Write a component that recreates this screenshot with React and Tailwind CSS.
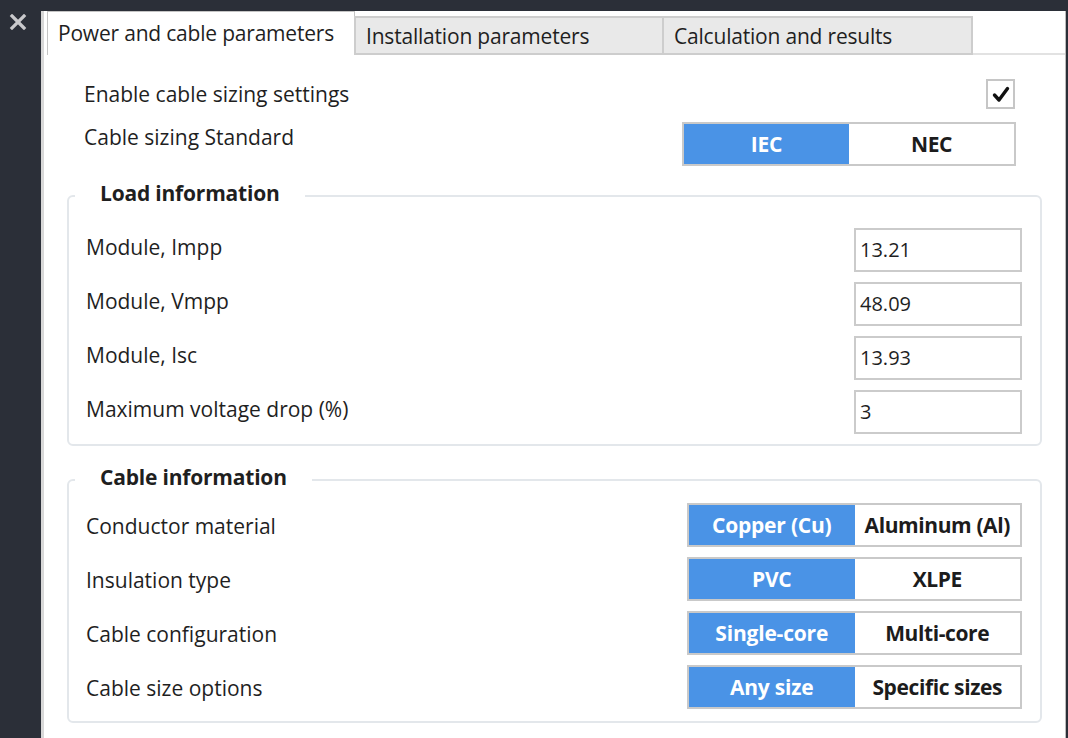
import React from "react";

const font = { fontFamily: '"Open Sans", "Liberation Sans", sans-serif' };

function Toggle({ left, right, className }) {
  return (
    <div className={"flex h-[44px] border-2 border-[#c9c9c9] " + className}>
      <div className="flex-1 flex items-center justify-center bg-[#4a93e6] text-white font-bold text-[21px] leading-[28px] tracking-[-0.2px]">
        {left}
      </div>
      <div className="flex-1 flex items-center justify-center bg-white text-[#1c1c1c] font-bold text-[21px] leading-[28px] tracking-[-0.4px]">
        {right}
      </div>
    </div>
  );
}

function InputRow({ label, value }) {
  return (
    <div className="flex items-center justify-between">
      <span className="pb-[6px]">{label}</span>
      <div className="w-[168px] h-[44px] border-2 border-[#cbcbcb] flex items-center pl-[4px] text-[20px]">
        {value}
      </div>
    </div>
  );
}

function ToggleRow({ label, left, right }) {
  return (
    <div className="flex items-center justify-between">
      <span className="pt-[2px]">{label}</span>
      <Toggle left={left} right={right} className="w-[335px]" />
    </div>
  );
}

export default function App() {
  return (
    <div
      className="w-[1068px] h-[738px] bg-[#2b2f38] flex pt-[11px] pr-[2px] text-[#1f1f1f] text-[21px] leading-[28px] overflow-hidden"
      style={font}
    >
      <div className="w-[41px] shrink-0 flex justify-center pt-[2px]">
        <svg width="18" height="16" viewBox="0 0 18 16" className="mt-[1px] -ml-[5px]">
          <path d="M3 2 L15 14 M15 2 L3 14" stroke="#c9c9cc" strokeWidth="3.2" strokeLinecap="square" />
        </svg>
      </div>
      <div className="flex-1 bg-white border-l-[3px] border-[#d8d8d8] border-r border-r-[#bcbcbc] flex flex-col">
        {/* Tabs */}
        <div className="flex items-end h-[44px] pl-[3px]">
          <div className="h-[44px] w-[308px] border border-b-0 border-[#c4c4c4] bg-white flex items-center pl-[10px] pb-[1px] tracking-[-0.2px]">
            Power and cable parameters
          </div>
          <div className="h-[39px] w-[310px] border-2 border-[#cdcdcd] bg-[#e9e9e9] flex items-center pl-[10px] -ml-[1px] tracking-[-0.2px]">
            Installation parameters
          </div>
          <div className="h-[39px] w-[309px] border-2 border-l-0 border-[#cdcdcd] bg-[#e9e9e9] flex items-center pl-[10px] tracking-[-0.2px]">
            Calculation and results
          </div>
          <div className="flex-1 h-[2px] bg-[#e2e2e2]"></div>
        </div>

        {/* Top settings */}
        <div className="pl-[40px] pr-[50px] pt-[24px]">
          <div className="flex items-center justify-between h-[30px]">
            <span>Enable cable sizing settings</span>
            <div className="w-[29px] h-[30px] border-2 border-[#c6c6c6] flex items-center justify-center">
              <svg width="18" height="17" viewBox="0 0 18 17">
                <path d="M2.5 9 L7 14 L15.5 2.5" fill="none" stroke="#111" strokeWidth="3.4" strokeLinecap="round" strokeLinejoin="round" />
              </svg>
            </div>
          </div>
          <div className="flex items-start justify-between mt-[13px]">
            <span className="pt-[1px]">Cable sizing Standard</span>
            <Toggle left="IEC" right="NEC" className="w-[334px] -mr-[1px]" />
          </div>
        </div>

        {/* Load information */}
        <fieldset className="mx-[23px] mt-[13px] border-2 border-[#e3e7eb] rounded-[6px] px-0 pt-[15px] pb-[10px]">
          <legend className="ml-[6px] px-[25px] pb-[6px] font-bold text-[21px] leading-[28px] tracking-[-0.2px]">Load information</legend>
          <div className="flex flex-col gap-[10px] pl-[17px] pr-[18px]">
            <InputRow label="Module, Impp" value="13.21" />
            <InputRow label="Module, Vmpp" value="48.09" />
            <InputRow label="Module, Isc" value="13.93" />
            <InputRow label="Maximum voltage drop (%)" value="3" />
          </div>
        </fieldset>

        {/* Cable information */}
        <fieldset className="mx-[23px] mt-[17px] border-2 border-[#e3e7eb] rounded-[6px] px-0 pt-[6px] pb-[12px]">
          <legend className="ml-[6px] px-[25px] pb-[6px] font-bold text-[21px] leading-[28px] tracking-[-0.2px]">Cable information</legend>
          <div className="flex flex-col gap-[10px] pl-[17px] pr-[18px]">
            <ToggleRow label="Conductor material" left="Copper (Cu)" right="Aluminum (Al)" />
            <ToggleRow label="Insulation type" left="PVC" right="XLPE" />
            <ToggleRow label="Cable configuration" left="Single-core" right="Multi-core" />
            <ToggleRow label="Cable size options" left="Any size" right="Specific sizes" />
          </div>
        </fieldset>
      </div>
    </div>
  );
}
